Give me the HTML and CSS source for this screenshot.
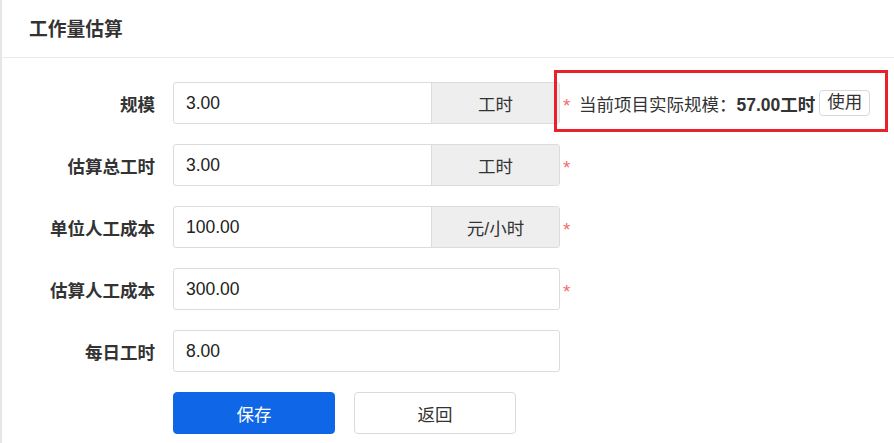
FILE: index.html
```html
<!DOCTYPE html>
<html lang="zh">
<head>
<meta charset="utf-8">
<link rel="stylesheet" href="styles.css">
</head>
<body>
<div class="panel">
  <div class="panel-head">工作量估算</div>
  <div class="form">
    <div class="row">
      <label class="lbl">规模</label>
      <div class="group">
        <div class="input">3.00</div>
        <div class="addon">工时</div>
      </div>
      <span class="req">*</span>
      <span class="hint">当前项目实际规模：<b>57.00工时</b></span>
      <button class="use">使用</button>
      <div class="mark"></div>
    </div>
    <div class="row">
      <label class="lbl">估算总工时</label>
      <div class="group">
        <div class="input">3.00</div>
        <div class="addon">工时</div>
      </div>
      <span class="req">*</span>
    </div>
    <div class="row">
      <label class="lbl">单位人工成本</label>
      <div class="group">
        <div class="input">100.00</div>
        <div class="addon">元/小时</div>
      </div>
      <span class="req">*</span>
    </div>
    <div class="row">
      <label class="lbl">估算人工成本</label>
      <div class="group">
        <div class="input">300.00</div>
      </div>
      <span class="req">*</span>
    </div>
    <div class="row">
      <label class="lbl">每日工时</label>
      <div class="group">
        <div class="input">8.00</div>
      </div>
    </div>
    <div class="row actions">
      <span class="lbl"></span>
      <button class="btn primary">保存</button>
      <button class="btn">返回</button>
    </div>
  </div>
</div>
</body>
</html>
```
FILE: styles.css
```css
* { box-sizing: border-box; }
body {
  margin: 0;
  background: #fff;
  font-family: "Liberation Sans", "Noto Sans CJK SC", sans-serif;
  color: #333;
}
.panel {
  border-left: 2px solid #e6e6e6;
  height: 443px;
}
.panel-head {
  height: 58px;
  border-bottom: 1px solid #ebebeb;
  padding-left: 27px;
  font-size: 18.75px;
  font-weight: bold;
  color: #333;
  display: flex;
  align-items: center;
  padding-bottom: 2px;
}
.form {
  padding-top: 24px;
  display: flex;
  flex-direction: column;
  gap: 20px;
}
.row {
  position: relative;
  display: flex;
  align-items: center;
  height: 42px;
}
.lbl {
  width: 153px;
  flex: none;
  text-align: right;
  font-size: 17.5px;
  font-weight: bold;
  color: #333;
  margin-right: 18px;
}
.group {
  width: 387px;
  height: 42px;
  display: flex;
  border: 1px solid #dcdcdc;
  border-radius: 3px;
  overflow: hidden;
  flex: none;
}
.input {
  flex: 1;
  display: flex;
  align-items: center;
  padding-left: 12px;
  font-size: 17.5px;
  color: #222;
}
.addon {
  width: 128px;
  background: #eeeeee;
  border-left: 1px solid #dcdcdc;
  display: flex;
  align-items: center;
  justify-content: center;
  font-size: 17.5px;
  color: #333;
}
.req {
  color: #f56c6c;
  font-size: 19px;
  margin-left: 3px;
  width: 12px;
  padding-top: 5px;
}
.hint {
  font-size: 17.5px;
  color: #333;
  margin-left: 4px;
}
.hint b { font-weight: bold; }
.use {
  margin-left: 4px;
  height: 26px;
  width: 51px;
  border: 1px solid #d5d9de;
  border-radius: 4px;
  background: #fff;
  font-family: inherit;
  font-size: 17.5px;
  line-height: 1;
  color: #333;
  padding: 0;
}
.mark {
  position: absolute;
  left: 552px;
  top: -12px;
  width: 334px;
  height: 62px;
  border: 3px solid #e8212b;
  pointer-events: none;
}
.actions .lbl { height: 1px; }
.btn {
  width: 162px;
  height: 42px;
  border: 1px solid #d6dbe1;
  border-radius: 4px;
  background: #fff;
  font-family: inherit;
  font-size: 17.5px;
  color: #333;
  margin-right: 19px;
  padding: 0;
}
.btn.primary {
  background: #0f67e8;
  border-color: #0f67e8;
  color: #fff;
}
```
